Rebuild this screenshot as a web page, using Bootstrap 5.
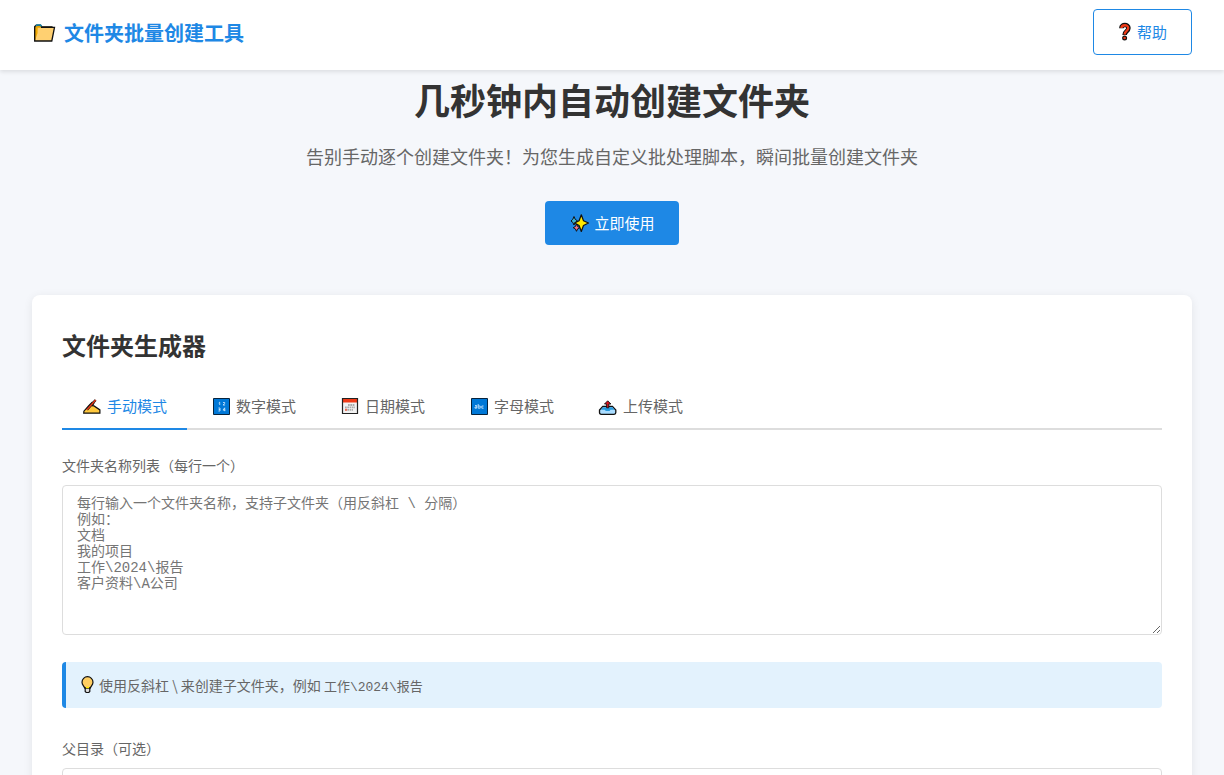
<!DOCTYPE html>
<html lang="zh-CN">
<head>
<meta charset="utf-8">
<meta name="viewport" content="width=device-width, initial-scale=1">
<title>文件夹批量创建工具</title>
<link href="https://cdn.jsdelivr.net/npm/bootstrap@5.3.0/dist/css/bootstrap.min.css" rel="stylesheet">
<style>
  :root { --brand: #1e88e5; --ink: #333; --muted: #666; --line: #ddd; }
  body { background: #f5f7fb; color: var(--ink); font-family: "Noto Sans CJK SC", sans-serif; font-size: 14px; line-height: 20px; }
  svg { display: block; flex: none; }
  .site-header { padding: 9px 32px 15px; box-shadow: 0 2px 4px rgba(0,0,0,.1); position: relative; z-index: 1; }
  .site-title { color: var(--brand); font-size: 20px; font-weight: 700; line-height: 28px; gap: 8px; padding-top: 2px; }
  .site-title:hover { color: var(--brand); }
  .btn-tool { --bs-btn-font-size: 15px; --bs-btn-line-height: 22px; --bs-btn-padding-x: 24px; --bs-btn-padding-y: 11px; --bs-btn-border-radius: 4px; gap: 4px; }
  .btn-brand { --bs-btn-color: #fff; --bs-btn-bg: var(--brand); --bs-btn-hover-color: #fff; --bs-btn-hover-bg: #1976d2; --bs-btn-border-width: 0; }
  .btn-outline-brand { --bs-btn-color: var(--brand); --bs-btn-bg: #fff; --bs-btn-border-color: var(--brand); --bs-btn-hover-color: #fff; --bs-btn-hover-bg: var(--brand); }
  .hero-title { font-size: 36px; line-height: 54px; font-weight: 700; margin: 2px 0 15px; }
  .hero-lead { font-size: 18px; line-height: 30px; color: var(--muted); margin-bottom: 30px; }
  .hero-area { padding-bottom: 50px; }
  .tool-wrap { padding: 0 32px 32px; }
  .tool-card { border-radius: 8px; padding: 30px; box-shadow: 0 2px 10px rgba(0,0,0,.08); }
  .tool-heading { font-size: 24px; line-height: 36px; font-weight: 700; margin: 2px 0 21px; }
  .mode-tabs { border-bottom: 2px solid var(--line); gap: 4px; margin-bottom: 25px; }
  .mode-tabs .nav-link { background: transparent; font-size: 15px; line-height: 22px; padding: 11px 20px; color: var(--muted); border: 0; border-bottom: 2px solid transparent; border-radius: 0; margin-bottom: -2px; gap: 6px; }
  .mode-tabs .nav-link.active { color: var(--brand); border-color: var(--brand); }
  .form-label { color: var(--muted); margin-bottom: 10px; }
  .form-control { border-color: var(--line); border-radius: 4px; padding: 10px 14px; font-size: 14px; line-height: 16px; }
  .form-control::placeholder { color: #757575; }
  .mono { font-family: "Liberation Mono", "Noto Sans CJK SC", monospace; }
  .names-box { height: 150px; min-height: 150px; }
  .hint { background: #e3f2fd; border-left: 4px solid var(--brand); border-radius: 4px; color: var(--muted); padding: 13px 14px; gap: 4px; margin: 27px 0 30px; }
  .hint code { color: inherit; font-size: 13px; line-height: 1; }
</style>
</head>
<body>
<header class="site-header bg-white d-flex justify-content-between align-items-center">
  <a href="#" class="site-title d-flex align-items-center text-decoration-none">
    <svg width="24" height="22" viewBox="0 0 24 22"><path d="M2.7 19V4.5l1.5-1.3h4.3L10 4.8h10V7" fill="#e6a400" stroke="#111" stroke-width="1.2"/><path d="M4 4l1-1h3.5l1 1.5" fill="none" stroke="#1684a8" stroke-width="1.6"/><path d="M5.5 5.7h17L19.8 19H2.7z" fill="#ffd071"/><path d="M5.6 6v5L2.9 19V5z" fill="#f2a900"/><path d="M2.7 4.5V19h17.1L22.5 5.4H9" fill="none" stroke="#111" stroke-width="1.3"/></svg>
    <span>文件夹批量创建工具</span>
  </a>
  <button type="button" class="btn btn-tool btn-outline-brand d-flex align-items-center">
    <svg width="15" height="20" viewBox="0 0 15 20"><path d="M3.4 6.3C3.4 1.9 10.4 2 10.4 6c0 3.5-3.8 3-3.8 7" fill="none" stroke="#111" stroke-width="4.6"/><circle cx="6.6" cy="16" r="2.5" fill="#111"/><path d="M3.4 6C3.6 2.4 10.2 2.3 10.2 6c0 3.2-3.6 3-3.6 6.5" fill="none" stroke="#f03a17" stroke-width="2.3"/><circle cx="6.6" cy="16" r="1.3" fill="#f03a17"/></svg>
    <span>帮助</span>
  </button>
</header>

<main>
  <section class="hero-area text-center d-flex flex-column align-items-center">
    <h1 class="hero-title">几秒钟内自动创建文件夹</h1>
    <p class="hero-lead">告别手动逐个创建文件夹！为您生成自定义批处理脚本，瞬间批量创建文件夹</p>
    <button type="button" class="btn btn-tool btn-brand d-flex align-items-center">
      <svg width="21" height="20" viewBox="0 0 21 20"><g stroke="#111" stroke-linejoin="round"><path d="M5 3.5l1.2 2.8L8.5 8 6.2 9.4 5 12 3.8 9.4 2 8l1.8-1.7z" fill="#3cb4d0" stroke-width="1"/><path d="M7.5 11l1.1 2.5 2.2 1.2-2.2 1.2-1.1 2.4-1.1-2.4-2.2-1.2 2.2-1.2z" fill="#ef7588" stroke-width="1"/><path d="M12.3 1.8l2.2 5.9 5 2.3-5 2.5-2.2 6-2.2-6L5.7 10l4.4-2.3z" fill="#ffe900" stroke-width="1.2"/></g></svg>
      <span>立即使用</span>
    </button>
  </section>

  <div class="tool-wrap">
    <section class="tool-card bg-white">
      <h2 class="tool-heading">文件夹生成器</h2>
      <div class="mode-tabs nav" role="tablist">
        <button type="button" class="nav-link active d-flex align-items-center" role="tab" aria-selected="true">
          <svg width="19" height="18" viewBox="0 0 19 18"><path d="M1.7 16.2l.2-2L7 8.5l3.2-3.2 1.6 1-1.3 2.4 1.5.2 5.9 4v3.3z" fill="#ffc83d" stroke="#111" stroke-width="1.2"/><path d="M5 12.6L13.6 3" stroke="#111" stroke-width="2.4"/><path d="M4.9 12.7l8.8-9.8" stroke="#f03a17" stroke-width="1.4"/></svg>
          <span>手动模式</span>
        </button>
        <button type="button" class="nav-link d-flex align-items-center" role="tab" aria-selected="false">
          <svg width="19" height="18" viewBox="0 0 19 18"><path d="M2.5 1.5h16v16h-16z" fill="#0078d7" stroke="#06233d"/><path d="M7.7 6l1-.8V8M12 5.5h1.7v1L12 8h2.1M7.4 11h1.6v3H7.4M7.7 12.5H9M13.7 14.2v-3.4l-1.7 2.3h2.4" fill="none" stroke="#d9eeff" stroke-width=".8"/></svg>
          <span>数字模式</span>
        </button>
        <button type="button" class="nav-link d-flex align-items-center" role="tab" aria-selected="false">
          <svg width="19" height="18" viewBox="0 0 19 18"><path d="M2.5 1.5h15v15h-15z" fill="#f2f2f2"/><path d="M3 2h14v3.5H3z" fill="#f03a17"/><path d="M2.5 1.5h15v15h-15z" fill="none" stroke="#222" stroke-width="1.2"/><path d="M8 8h7M5 10.4h10M5 12.8h8" stroke="#aaa" stroke-width="1.8" stroke-dasharray="1.7 .6"/><path d="M5 11.7h2v2H5z" fill="#f36b51"/></svg>
          <span>日期模式</span>
        </button>
        <button type="button" class="nav-link d-flex align-items-center" role="tab" aria-selected="false">
          <svg width="19" height="18" viewBox="0 0 19 18"><path d="M2.5 1.5h16v16h-16z" fill="#0078d7" stroke="#06233d"/><path d="M6 8.5h1.7v2.7H6V10h1.7M9.2 7v4.2h2V9h-2M14.6 9h-1.8v2.2h1.8" fill="none" stroke="#d9eeff" stroke-width=".8"/></svg>
          <span>字母模式</span>
        </button>
        <button type="button" class="nav-link d-flex align-items-center" role="tab" aria-selected="false">
          <svg width="19" height="18" viewBox="0 0 19 18"><path d="M4.8 9.3h9.6l3.4 3.8v2.5q0 1.7-1.7 1.7H3.2q-1.7 0-1.7-1.7v-2.5z" fill="#a9dcff" stroke="#111" stroke-width="1.3"/><path d="M5 10.2h9.2l2.3 2.6h-4l-1 1.2H7.8l-1-1.2h-4z" fill="#2698dc"/><path d="M9.7 3.8L6.5 7h2.1v3.8h2.2V7h2.1z" fill="#d9121e" stroke="#111" stroke-width=".9"/></svg>
          <span>上传模式</span>
        </button>
      </div>

      <label for="names" class="form-label d-block">文件夹名称列表（每行一个）</label>
      <textarea id="names" class="form-control names-box mono" placeholder="每行输入一个文件夹名称，支持子文件夹（用反斜杠 \ 分隔）&#10;例如：&#10;文档&#10;我的项目&#10;工作\2024\报告&#10;客户资料\A公司"></textarea>

      <div class="hint d-flex align-items-center">
        <svg width="15" height="20" viewBox="0 0 15 20"><path d="M4.8 13.2C3.8 10.8 2 9.8 2 7.2a5.5 5.5 0 0 1 11 0c0 2.6-1.8 3.6-2.8 6z" fill="#ffce62" stroke="#111" stroke-width="1.2"/><path d="M5.2 13.2h4.6v3.3l-1 1H6.2l-1-1z" fill="#ddd" stroke="#111" stroke-width="1.2"/><path d="M6 12.5h3" stroke="#ffe900" stroke-width="1.5"/></svg>
        <span>使用反斜杠 \ 来创建子文件夹，例如 <code class="mono">工作\2024\报告</code></span>
      </div>

      <label for="parent" class="form-label d-block">父目录（可选）</label>
      <input type="text" id="parent" class="form-control">
    </section>
  </div>
</main>
<script src="https://cdn.jsdelivr.net/npm/bootstrap@5.3.0/dist/js/bootstrap.bundle.min.js"></script>
</body>
</html>
